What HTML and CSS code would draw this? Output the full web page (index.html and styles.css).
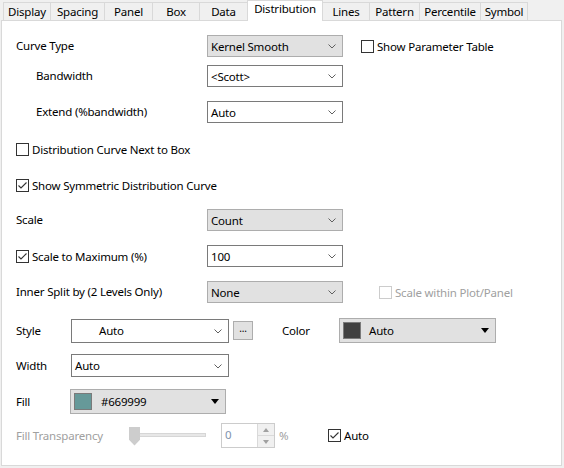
FILE: index.html
```html
<!DOCTYPE html>
<html>
<head>
<meta charset="utf-8">
<link rel="stylesheet" href="styles.css">
</head>
<body>
<div class="dialog">
  <div class="tabs">
    <div class="tab t-display">Display</div>
    <div class="tab t-spacing">Spacing</div>
    <div class="tab t-panel">Panel</div>
    <div class="tab t-box">Box</div>
    <div class="tab t-data">Data</div>
    <div class="tab selected t-dist">Distribution</div>
    <div class="tab after-sel t-lines">Lines</div>
    <div class="tab t-pattern">Pattern</div>
    <div class="tab t-pct">Percentile</div>
    <div class="tab last t-symbol">Symbol</div>
  </div>
  <div class="panel">
    <div class="row r1">
      <span class="lab col1">Curve Type</span>
      <div class="combo gray w136"><span class="ctext">Kernel Smooth</span><svg class="chev" width="8" height="5" viewBox="0 0 8 5"><polyline points="0.5,0.5 4,4 7.5,0.5" fill="none" stroke="#606060" stroke-width="1"/></svg></div>
      <div class="check ml18"><span class="box"></span><span>Show Parameter Table</span></div>
    </div>
    <div class="row r2">
      <span class="lab col1 indent">Bandwidth</span>
      <div class="combo white w136"><span class="ctext">&lt;Scott&gt;</span><svg class="chev" width="8" height="5" viewBox="0 0 8 5"><polyline points="0.5,0.5 4,4 7.5,0.5" fill="none" stroke="#606060" stroke-width="1"/></svg></div>
    </div>
    <div class="row r3">
      <span class="lab col1 indent">Extend (%bandwidth)</span>
      <div class="combo white w136"><span class="ctext">Auto</span><svg class="chev" width="8" height="5" viewBox="0 0 8 5"><polyline points="0.5,0.5 4,4 7.5,0.5" fill="none" stroke="#606060" stroke-width="1"/></svg></div>
    </div>
    <div class="row r4 crow">
      <div class="check"><span class="box"></span><span>Distribution Curve Next to Box</span></div>
    </div>
    <div class="row r5 crow">
      <div class="check"><span class="box"><svg width="11" height="11" viewBox="0 0 11 11"><polyline points="1.5,5.5 4,8 9.5,2.5" fill="none" stroke="#333" stroke-width="1.1"/></svg></span><span>Show Symmetric Distribution Curve</span></div>
    </div>
    <div class="row r6">
      <span class="lab col1">Scale</span>
      <div class="combo gray w136"><span class="ctext">Count</span><svg class="chev" width="8" height="5" viewBox="0 0 8 5"><polyline points="0.5,0.5 4,4 7.5,0.5" fill="none" stroke="#606060" stroke-width="1"/></svg></div>
    </div>
    <div class="row r7">
      <div class="check col1"><span class="box"><svg width="11" height="11" viewBox="0 0 11 11"><polyline points="1.5,5.5 4,8 9.5,2.5" fill="none" stroke="#333" stroke-width="1.1"/></svg></span><span>Scale to Maximum (%)</span></div>
      <div class="combo white w136"><span class="ctext">100</span><svg class="chev" width="8" height="5" viewBox="0 0 8 5"><polyline points="0.5,0.5 4,4 7.5,0.5" fill="none" stroke="#606060" stroke-width="1"/></svg></div>
    </div>
    <div class="row r8">
      <span class="lab col1">Inner Split by (2 Levels Only)</span>
      <div class="combo gray w136"><span class="ctext">None</span><svg class="chev" width="8" height="5" viewBox="0 0 8 5"><polyline points="0.5,0.5 4,4 7.5,0.5" fill="none" stroke="#606060" stroke-width="1"/></svg></div>
      <div class="check disabled ml36"><span class="box"></span><span>Scale within Plot/Panel</span></div>
    </div>
    <div class="row r9">
      <span class="lab col2">Style</span>
      <div class="combo white w158 h24"><span class="ctext style-auto">Auto</span><svg class="chev" width="8" height="5" viewBox="0 0 8 5"><polyline points="0.5,0.5 4,4 7.5,0.5" fill="none" stroke="#606060" stroke-width="1"/></svg></div>
      <div class="dots">...</div>
      <span class="lab color-lab">Color</span>
      <div class="cdrop w157"><span class="swatch dark"></span><span class="ctext">Auto</span><span class="tri"></span></div>
    </div>
    <div class="row r10">
      <span class="lab col2">Width</span>
      <div class="combo white w158 h23"><span class="ctext">Auto</span><svg class="chev" width="8" height="5" viewBox="0 0 8 5"><polyline points="0.5,0.5 4,4 7.5,0.5" fill="none" stroke="#606060" stroke-width="1"/></svg></div>
    </div>
    <div class="row r11">
      <span class="lab col3">Fill</span>
      <div class="cdrop w156"><span class="swatch teal"></span><span class="ctext hex">#669999</span><span class="tri"></span></div>
    </div>
    <div class="row r12">
      <span class="lab col4 dis">Fill Transparency</span>
      <div class="slider"><span class="thumb"></span><span class="track"></span></div>
      <div class="spin"><span class="sval">0</span><span class="sbtns"><span class="sbtn"><span class="up"></span></span><span class="sbtn"><span class="down"></span></span></span></div>
      <span class="pct">%</span>
      <div class="check auto-chk"><span class="box"><svg width="11" height="11" viewBox="0 0 11 11"><polyline points="1.5,5.5 4,8 9.5,2.5" fill="none" stroke="#333" stroke-width="1.1"/></svg></span><span>Auto</span></div>
    </div>
  </div>
</div>
</body>
</html>
```
FILE: styles.css
```css
* { box-sizing: border-box; }
html, body { margin: 0; padding: 0; }
body {
  width: 564px;
  height: 468px;
  background: #f0f0f0;
  font-family: "Noto Sans", "Liberation Sans", sans-serif;
  font-size: 11.5px;
  letter-spacing: -0.2px;
  color: #000;
  overflow: hidden;
}
.dialog { width: 564px; }
.tabs {
  display: flex;
  align-items: flex-end;
  height: 20px;
  padding-left: 3px;
}
.tab {
  height: 18px;
  border: 1px solid #d9d9d9;
  border-right: none;
  border-bottom: none;
  background: #f0f0f0;
  text-align: center;
  line-height: 16px;
  padding-top: 1px;
  white-space: nowrap;
}
.tab.last { border-right: 1px solid #d9d9d9; }
.tab.after-sel { border-left: none; }
.tab.selected {
  height: 21px;
  margin-bottom: -1px;
  background: #fff;
  border-right: 1px solid #d9d9d9;
  position: relative;
  z-index: 1;
  line-height: 15px;
  padding-top: 0;
}
.t-display { width: 47px; }
.t-spacing { width: 54px; }
.t-panel { width: 48px; }
.t-box { width: 47px; }
.t-data { width: 48px; }
.t-dist { width: 76px; }
.t-lines { width: 46px; }
.t-pattern { width: 50px; }
.t-pct { width: 61px; }
.t-symbol { width: 48px; }

.panel {
  margin-left: 1px;
  width: 561px;
  height: 446px;
  background: #fff;
  border: 1px solid #d9d9d9;
  padding: 14px 0 0 14px;
}
.row { display: flex; align-items: center; height: 22px; }
.r1 { margin-top: 0; }
.r2 { margin-top: 8px; }
.r3 { margin-top: 14px; }
.r4 { margin-top: 20px; height: 13px; }
.r5 { margin-top: 23px; height: 13px; }
.r6 { margin-top: 17px; }
.r7 { margin-top: 14px; }
.r8 { margin-top: 14px; }
.r9 { margin-top: 15px; height: 25px; }
.r10 { margin-top: 11px; height: 23px; }
.r11 { margin-top: 12px; height: 25px; }
.r12 { margin-top: 9px; height: 25px; }

.lab { white-space: nowrap; }
.col1 { width: 191px; flex: none; }
.col2 { width: 55px; flex: none; }
.col3 { width: 54px; flex: none; }
.col4 { width: 113px; flex: none; }
.r1 .lab, .r2 .lab, .r3 .lab, .r6 .lab, .r8 .lab { margin-top: -2px; }
.indent { padding-left: 20px; }
.dis { color: #a0a0a0; }

.combo {
  display: flex;
  align-items: center;
  height: 22px;
  border: 1px solid #7a7a7a;
  padding: 0 6px 0 3px;
  flex: none;
}
.combo.gray { background: #e1e1e1; border-color: #adadad; }
.combo.white { background: #fff; }
.combo .ctext { flex: 1; white-space: nowrap; }
.combo .chev { flex: none; margin-top: 1px; }
.w136 { width: 136px; }
.w158 { width: 158px; }
.h24 { height: 24px; }
.h23 { height: 23px; }
.style-auto { padding-left: 24px; }

.check { display: flex; align-items: center; white-space: nowrap; }
.check .box {
  width: 13px;
  height: 13px;
  border: 1px solid #333;
  background: #fff;
  margin-right: 3px;
  flex: none;
  display: flex;
  align-items: center;
  justify-content: center;
}
.check.disabled { color: #a0a0a0; }
.check.disabled .box { border-color: #cccccc; }
.ml18 { margin-left: 18px; }
.ml36 { margin-left: 36px; }

.dots {
  width: 20px;
  height: 19px;
  margin-left: 4px;
  background: #e1e1e1;
  border: 1px solid #adadad;
  font-size: 10px;
  line-height: 12px;
  text-align: center;
  flex: none;
  align-self: center;
}
.color-lab { margin-left: 29px; width: 57px; flex: none; }
.cdrop {
  display: flex;
  align-items: center;
  height: 25px;
  background: #e1e1e1;
  border: 1px solid #adadad;
  padding: 0 5px 0 3px;
  flex: none;
}
.w157 { width: 157px; }
.w156 { width: 156px; }
.cdrop .ctext { flex: 1; padding-left: 8px; white-space: nowrap; }
.cdrop .hex { padding-left: 9px; }
.swatch {
  width: 18px;
  height: 17px;
  border: 1px solid #7a7a7a;
  flex: none;
}
.swatch.dark { background: #404040; }
.swatch.teal { background: #669999; }
.tri {
  width: 0;
  height: 0;
  border-left: 4.5px solid transparent;
  border-right: 4.5px solid transparent;
  border-top: 5px solid #000;
  margin-right: 1px;
  flex: none;
}

.slider {
  display: flex;
  align-items: center;
  width: 77px;
  height: 25px;
  flex: none;
}
.thumb {
  width: 11px;
  height: 19px;
  background: #cdcdcd;
  clip-path: polygon(0 0, 100% 0, 100% 70%, 50% 100%, 0 70%);
  flex: none;
  margin-top: 1px;
}
.track {
  width: 66px;
  height: 4px;
  background: #e7e7e7;
  border: 1px solid #d6d6d6;
  border-left: none;
  margin-top: -2px;
}
.spin {
  display: flex;
  margin-left: 15px;
  width: 54px;
  height: 25px;
  border: 1px solid #cccccc;
  background: #fff;
  flex: none;
}
.sval { flex: 1; padding-left: 3px; line-height: 21px; color: #7f93ad; }
.sbtns { width: 17px; display: flex; flex-direction: column; border-left: 1px solid #d9d9d9; }
.sbtn {
  flex: 1;
  background: #f0f0f0;
  display: flex;
  align-items: center;
  justify-content: center;
}
.sbtn + .sbtn { border-top: 1px solid #d9d9d9; }
.up { width: 0; height: 0; border-left: 3.5px solid transparent; border-right: 3.5px solid transparent; border-bottom: 4px solid #a0a0a0; }
.down { width: 0; height: 0; border-left: 3.5px solid transparent; border-right: 3.5px solid transparent; border-top: 4px solid #a0a0a0; }
.pct { margin-left: 4px; color: #a0a0a0; width: 12px; flex: none; }
.auto-chk { margin-left: 37px; }
```
